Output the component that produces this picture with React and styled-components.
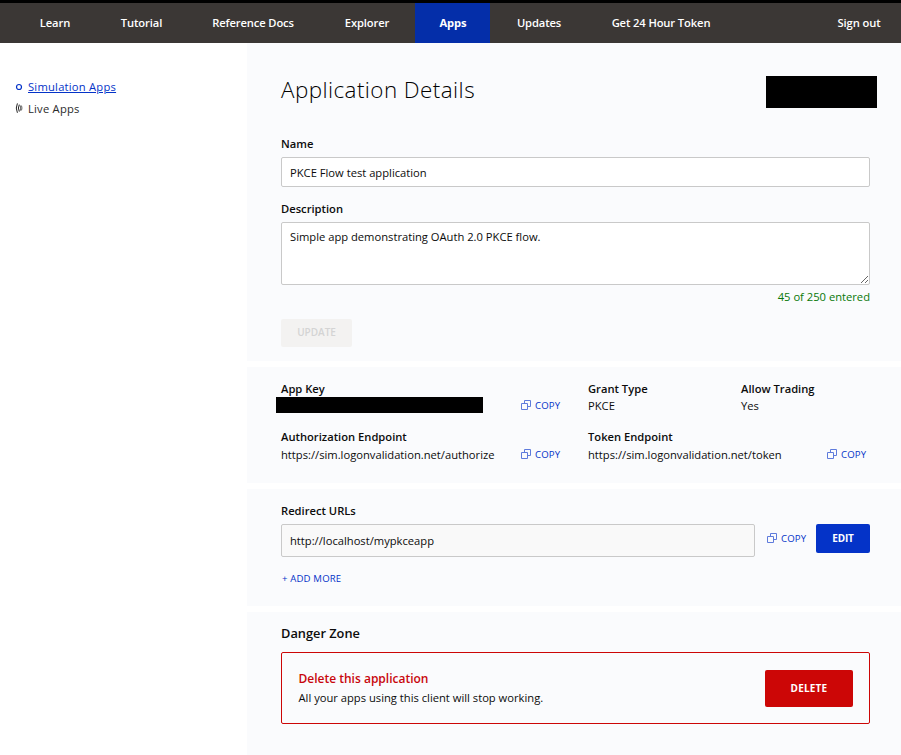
import React from "react";
import styled, { createGlobalStyle } from "styled-components";

const Global = createGlobalStyle`
  *, *::before, *::after { box-sizing: border-box; }
  body {
    margin: 0;
    background: #fff;
    color: #0c0c0c;
    font: 400 11.2px/16px "Open Sans", "Noto Sans", sans-serif;
    overflow: hidden;
  }
  button, input, textarea { font: inherit; color: inherit; margin: 0; }
  h1, h2, h3, p, dl, dt, dd { margin: 0; }
`;

const Page = styled.div`
  display: flex;
  flex-direction: column;
  height: 755px;
`;

const NavBar = styled.nav`
  display: flex;
  height: 43px;
  border-top: 3px solid #000;
  background: #3b3735;
  padding-left: 14px;
`;

const NavItem = styled.a`
  display: flex;
  align-items: center;
  justify-content: center;
  width: ${(p) => p.$width}px;
  margin-left: ${(p) => (p.$push ? "auto" : 0)};
  padding-left: 1px;
  color: #fff;
  font-weight: ${(p) => (p.$active ? 700 : 600)};
  letter-spacing: -0.12px;
  white-space: nowrap;
  background: ${(p) => (p.$active ? "#042ea9" : "transparent")};
`;

const Body = styled.div`
  display: flex;
  flex: 1;
`;

const Sidebar = styled.aside`
  display: flex;
  flex-direction: column;
  gap: 6px;
  width: 247px;
  padding: 36px 0 0 15px;
`;

const SideLink = styled.a`
  display: flex;
  align-items: center;
  gap: 5px;
  letter-spacing: 0.23px;
  color: ${(p) => (p.$active ? "#0433c8" : "#2b2b2b")};
  span {
    text-decoration: ${(p) => (p.$active ? "underline" : "none")};
    text-underline-offset: 1px;
  }
  svg { display: block; width: 8px; height: 12px; }
`;

const Main = styled.main`
  display: flex;
  flex-direction: column;
  gap: 6px;
  width: 654px;
`;

const Panel = styled.section`
  height: ${(p) => p.$height}px;
  padding: ${(p) => p.$top}px 31px 0 34px;
  background: #fafbfd;
`;

const TitleRow = styled.header`
  display: flex;
  justify-content: space-between;
  align-items: flex-start;
  margin-right: -7px;
  height: 63px;
`;

const Title = styled.h1`
  margin-top: 1px;
  font-size: 22.4px;
  font-weight: 300;
  line-height: 32px;
  letter-spacing: 0.45px;
  color: #000;
`;

const Redaction = styled.div`
  width: ${(p) => p.$width}px;
  height: ${(p) => p.$height}px;
  margin: ${(p) => p.$margin};
  background: #000;
`;

const Label = styled.label`
  display: block;
  font-weight: 600;
`;

const TextField = styled.input`
  display: block;
  width: ${(p) => p.$width || 589}px;
  height: ${(p) => p.$height || 30}px;
  padding: 0 8px;
  border: 1px solid #c9c9c9;
  border-radius: 2px;
  background: ${(p) => (p.readOnly ? "#f9f9f9" : "#fff")};
  outline: 0;
`;

const NameField = styled(TextField)`
  margin: 5px 0 14px;
`;

const TextArea = styled.textarea`
  display: block;
  width: 589px;
  height: 63px;
  margin-top: 5px;
  padding: 6px 8px;
  border: 1px solid #c9c9c9;
  border-radius: 2px;
  background: #fff;
  outline: 0;
  resize: both;
`;

const Counter = styled.p`
  margin-top: 4px;
  text-align: right;
  color: #087808;
`;

const Button = styled.button`
  display: block;
  width: ${(p) => p.$width}px;
  height: ${(p) => p.$height}px;
  padding: 0 0 1px;
  border: 0;
  border-radius: 2px;
  font-size: 10px;
  font-weight: 700;
  line-height: 16px;
  letter-spacing: ${(p) => p.$track || 0}px;
  color: #fff;
  background: ${(p) => p.$color};
`;

const UpdateButton = styled(Button)`
  margin-top: 14px;
  padding-bottom: 2px;
  font-weight: 600;
  color: #d4d4d4;
`;

const DetailGrid = styled.dl`
  display: grid;
  grid-template-columns: 240px 67px 153px 86px 43px;
  grid-template-rows: 48px 34px;
`;

const Detail = styled.div`
  grid-column: ${(p) => p.$column};
  grid-row: ${(p) => p.$row};
  white-space: nowrap;
  dt { font-weight: 600; }
  dd { margin-top: ${(p) => (p.$row === 2 ? 2 : 1)}px; }
`;

const CopyLink = styled.button`
  display: flex;
  align-items: center;
  gap: 4px;
  padding: 0;
  border: 0;
  background: none;
  color: #0433c8;
  font-size: 9.6px;
  line-height: 16px;
  letter-spacing: 0.15px;
  svg { display: block; width: 10px; height: 10px; margin-bottom: 2px; }
`;

const GridCopy = styled(CopyLink)`
  grid-column: ${(p) => p.$column};
  grid-row: ${(p) => p.$row};
  align-self: start;
  margin-top: ${(p) => (p.$row === 2 ? 18 : 17)}px;
`;

const UrlRow = styled.div`
  display: flex;
  align-items: flex-start;
  margin-top: 5px;
`;

const UrlCopy = styled(CopyLink)`
  margin: 7px 0 0 12px;
  width: 49px;
`;

const AddMore = styled(CopyLink)`
  margin: 14px 0 0 1px;
`;

const ZoneHeading = styled.h2`
  font-size: 12.8px;
  font-weight: 600;
  line-height: 18px;
`;

const DangerBox = styled.div`
  display: flex;
  justify-content: space-between;
  height: 72px;
  margin-top: 10px;
  padding: 17px 16px 0 16.5px;
  border: 1px solid #cc0606;
  border-radius: 2px;
`;

const DangerTitle = styled.h3`
  font-size: 12px;
  font-weight: 600;
  line-height: 18px;
  color: #c8060c;
`;

const DangerNote = styled.p`
  margin-top: 2px;
`;

const CopyIcon = () => (
  <svg viewBox="0 0 10 10" fill="none" stroke="#5e7bdc" strokeWidth="1">
    <path d="M.5 3.5h6v6h-6z" />
    <path d="M3.5 3.5v-3h6v6h-3" />
  </svg>
);

const CircleIcon = () => (
  <svg viewBox="0 0 8 12" fill="none" stroke="#0433c8" strokeWidth="1.2">
    <circle cx="4" cy="6" r="2.5" />
  </svg>
);

const LiveIcon = () => (
  <svg viewBox="0 0 8 12" fill="none" stroke="#222" strokeWidth="1">
    <path d="M2.4.4Q.2 5 2.4 9.8M4.3 1.6Q2.5 5 4.3 8.6" />
    <path d="M5.2 2.4Q6.2 5 5.2 7.8M6.5 2.6Q7.4 5 6.5 7.4" strokeWidth=".7" />
  </svg>
);

const navItems = [
  { text: "Learn", width: 81 },
  { text: "Tutorial", width: 92 },
  { text: "Reference Docs", width: 131 },
  { text: "Explorer", width: 97 },
  { text: "Apps", width: 75, active: true },
  { text: "Updates", width: 97 },
  { text: "Get 24 Hour Token", width: 147 },
];

export default function App() {
  return (
    <Page>
      <Global />
      <NavBar>
        {navItems.map((n) => (
          <NavItem key={n.text} $width={n.width} $active={n.active}>
            {n.text}
          </NavItem>
        ))}
        <NavItem $width={85} $push>Sign out</NavItem>
      </NavBar>
      <Body>
        <Sidebar>
          <SideLink $active><CircleIcon /><span>Simulation Apps</span></SideLink>
          <SideLink><LiveIcon /><span>Live Apps</span></SideLink>
        </Sidebar>
        <Main>
          <Panel $height={318} $top={30}>
            <TitleRow>
              <Title>Application Details</Title>
              <Redaction $width={111} $height={32} $margin="3px 0 0" />
            </TitleRow>
            <Label>Name</Label>
            <NameField defaultValue="PKCE Flow test application" />
            <Label>Description</Label>
            <TextArea defaultValue="Simple app demonstrating OAuth 2.0 PKCE flow." />
            <Counter>45 of 250 entered</Counter>
            <UpdateButton $width={71} $height={28} $color="#f3f2f1">UPDATE</UpdateButton>
          </Panel>
          <Panel $height={116} $top={14}>
            <DetailGrid>
              <Detail $column={1} $row={1}>
                <dt>App Key</dt>
                <dd><Redaction $width={207} $height={16} $margin="-1px 0 0 -5px" /></dd>
              </Detail>
              <GridCopy $column={2} $row={1}><CopyIcon />COPY</GridCopy>
              <Detail $column={3} $row={1}><dt>Grant Type</dt><dd>PKCE</dd></Detail>
              <Detail $column="4 / 6" $row={1}><dt>Allow Trading</dt><dd>Yes</dd></Detail>
              <Detail $column={1} $row={2}>
                <dt>Authorization Endpoint</dt>
                <dd>https://sim.logonvalidation.net/authorize</dd>
              </Detail>
              <GridCopy $column={2} $row={2}><CopyIcon />COPY</GridCopy>
              <Detail $column="3 / 5" $row={2}>
                <dt>Token Endpoint</dt>
                <dd>https://sim.logonvalidation.net/token</dd>
              </Detail>
              <GridCopy $column={5} $row={2}><CopyIcon />COPY</GridCopy>
            </DetailGrid>
          </Panel>
          <Panel $height={117} $top={14}>
            <Label>Redirect URLs</Label>
            <UrlRow>
              <TextField $width={474} $height={33} readOnly value="http://localhost/mypkceapp" />
              <UrlCopy><CopyIcon />COPY</UrlCopy>
              <Button $width={54} $height={29} $color="#0433c8" $track={-0.2}>EDIT</Button>
            </UrlRow>
            <AddMore>+ ADD MORE</AddMore>
          </Panel>
          <Panel $height={143} $top={12}>
            <ZoneHeading>Danger Zone</ZoneHeading>
            <DangerBox>
              <div>
                <DangerTitle>Delete this application</DangerTitle>
                <DangerNote>All your apps using this client will stop working.</DangerNote>
              </div>
              <Button $width={88} $height={37} $color="#cc0606" $track={0.2}>DELETE</Button>
            </DangerBox>
          </Panel>
        </Main>
      </Body>
    </Page>
  );
}
